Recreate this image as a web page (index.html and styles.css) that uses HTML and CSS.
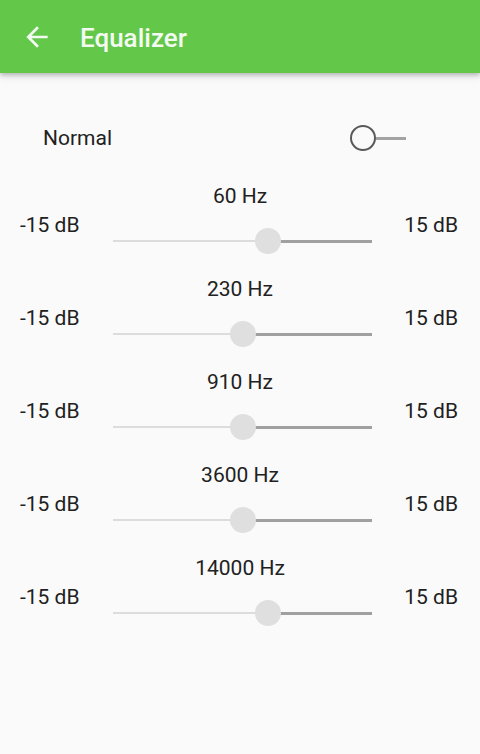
FILE: index.html
```html
<!DOCTYPE html>
<html>

<head>
    <meta name="viewport" content="width=device-width">
    <link rel="stylesheet" href="styles.css">
    <title>Equalizer</title>
</head>

<body>
    <div id="toolbar">
        <svg class="back" viewBox="0 0 24 24" width="32" height="32">
            <path d="M20 11H7.83l5.59-5.59L12 4l-8 8 8 8 1.41-1.41L7.83 13H20v-2z" fill="currentColor"/>
        </svg>
        <span class="title">Equalizer</span>
    </div>

    <div id="content">
        <div class="preset">
            <span>Normal</span>
            <span class="switch"><span class="knob"></span><span class="rail"></span></span>
        </div>

        <div class="band">
            <div class="freq">60 Hz</div>
            <div class="row">
                <span class="min">-15 dB</span>
                <div class="slider" style="--pos: 60%"><span class="low"></span><span class="high"></span><span class="thumb"></span></div>
                <span class="max">15 dB</span>
            </div>
        </div>
        <div class="band">
            <div class="freq">230 Hz</div>
            <div class="row">
                <span class="min">-15 dB</span>
                <div class="slider" style="--pos: 50%"><span class="low"></span><span class="high"></span><span class="thumb"></span></div>
                <span class="max">15 dB</span>
            </div>
        </div>
        <div class="band">
            <div class="freq">910 Hz</div>
            <div class="row">
                <span class="min">-15 dB</span>
                <div class="slider" style="--pos: 50%"><span class="low"></span><span class="high"></span><span class="thumb"></span></div>
                <span class="max">15 dB</span>
            </div>
        </div>
        <div class="band">
            <div class="freq">3600 Hz</div>
            <div class="row">
                <span class="min">-15 dB</span>
                <div class="slider" style="--pos: 50%"><span class="low"></span><span class="high"></span><span class="thumb"></span></div>
                <span class="max">15 dB</span>
            </div>
        </div>
        <div class="band">
            <div class="freq">14000 Hz</div>
            <div class="row">
                <span class="min">-15 dB</span>
                <div class="slider" style="--pos: 60%"><span class="low"></span><span class="high"></span><span class="thumb"></span></div>
                <span class="max">15 dB</span>
            </div>
        </div>
    </div>
</body>

</html>
```

FILE: styles.css
```css
body,
html {
    width: 100%;
    height: 100%;
}

body {
    margin: 0;
    background-color: #fafafa;
    font-family: Roboto, "Noto Sans", sans-serif;
    font-size: 21px;
    color: #212121;
}

#toolbar {
    height: 73px;
    background-color: #63c74a;
    color: #f3faf1;
    display: flex;
    align-items: center;
    padding-left: 21px;
    box-shadow: 0 2px 4px rgba(0, 0, 0, 0.2), 0 4px 8px rgba(0, 0, 0, 0.1);
    position: relative;
}

#toolbar .back {
    margin-top: 1px;
}

#toolbar .title {
    margin-left: 27px;
    font-size: 26px;
    font-weight: 500;
    margin-top: 2px;
}

#content {
    padding-top: 41px;
}

.preset {
    height: 48px;
    display: flex;
    align-items: center;
    justify-content: space-between;
    padding-left: 43px;
    padding-right: 74px;
    margin-bottom: 22px;
}

.switch {
    display: flex;
    align-items: center;
}

.switch .knob {
    width: 22px;
    height: 22px;
    border: 2.5px solid #595959;
    border-radius: 50%;
}

.switch .rail {
    width: 30px;
    height: 3px;
    background-color: #a3a3a3;
}

.band {
    height: 93px;
}

.freq {
    line-height: 24px;
    text-align: center;
}

.row {
    display: grid;
    grid-template-columns: 113px 259px 1fr;
    align-items: start;
}

.row .min {
    padding-left: 20px;
    padding-top: 5px;
    line-height: 24px;
    white-space: nowrap;
}

.row .max {
    justify-self: end;
    padding-right: 22px;
    padding-top: 5px;
    line-height: 24px;
}

.slider {
    position: relative;
    height: 26px;
    margin-top: 20px;
    display: flex;
    align-items: center;
}

.slider .low {
    width: var(--pos);
    height: 2px;
    background-color: #dcdcdc;
}

.slider .high {
    flex: 1;
    height: 3px;
    background-color: #a0a0a0;
}

.slider .thumb {
    position: absolute;
    top: 0;
    left: calc(var(--pos) - 13px);
    width: 26px;
    height: 26px;
    border-radius: 50%;
    background-color: #dfdfdf;
}
```
